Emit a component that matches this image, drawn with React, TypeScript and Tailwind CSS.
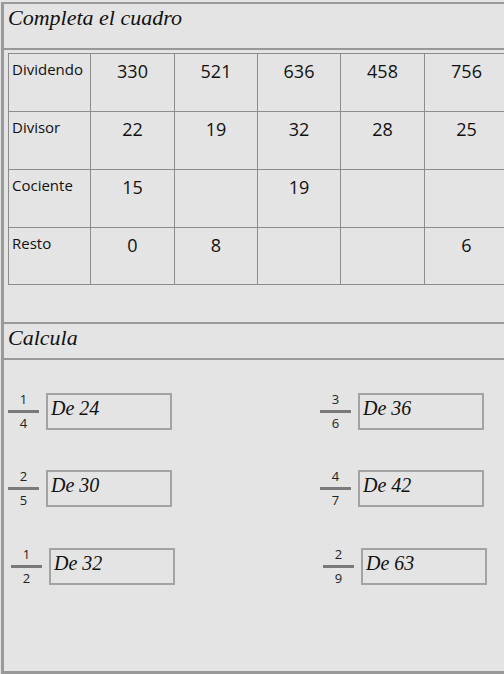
import React from "react";

const script = { fontFamily: '"Liberation Serif", "Times New Roman", serif' };
const sans = { fontFamily: '"Open Sans", "Liberation Sans", sans-serif' };

const rows = [
  { label: "Dividendo", values: ["330", "521", "636", "458", "756"] },
  { label: "Divisor", values: ["22", "19", "32", "28", "25"] },
  { label: "Cociente", values: ["15", "", "19", "", ""] },
  { label: "Resto", values: ["0", "8", "", "", "6"] },
];

const rowHeights = ["h-[58px]", "h-[58px]", "h-[58px]", "h-[57px]"];

const Fraction = ({ top, bottom }: { top: string; bottom: string }) => (
  <div className="flex flex-col items-center w-[31px] text-[13px] text-[#222]" style={sans}>
    <span className="leading-[13px]">{top}</span>
    <div className="h-[3px] w-[31px] bg-[#7a7a7a] my-[4px]" />
    <span className="leading-[13px]">{bottom}</span>
  </div>
);

const Item = ({ top, bottom, of, shift }: { top: string; bottom: string; of: string; shift?: boolean }) => (
  <div className={`flex items-center gap-[7px] ${shift ? "ml-[3px]" : ""}`}>
    <Fraction top={top} bottom={bottom} />
    <div className="w-[126px] h-[37px] border-2 border-[#a3a3a3] pl-[3px] pt-[1px]">
      <span className="italic text-[20px] leading-[24px] text-[#111]" style={script}>
        {of}
      </span>
    </div>
  </div>
);

const App = () => {
  return (
    <div className="w-[504px] h-[674px] bg-[#e4e4e4] pt-[2px] pl-[1px] overflow-hidden">
      <div className="h-[672px] border-l-[3px] border-b-[3px] border-[#999] flex flex-col">
        {/* Completa el cuadro */}
        <div className="h-[48px] border-t-2 border-b-2 border-[#999] pl-[4px] pt-[1px]">
          <span className="italic text-[22px] leading-[26px] text-[#111]" style={script}>
            Completa el cuadro
          </span>
        </div>

        <div className="mt-[3px] ml-[4px] w-[600px] border-l border-t border-[#8c8c8c]">
          {rows.map((row, i) => (
            <div key={row.label} className={`grid grid-cols-[82px_84px_83px_83px_84px_84px] ${rowHeights[i]}`}>
              <div className="border-r border-b border-[#8c8c8c] pl-[3px] pt-[5px] text-[15px] leading-[20px] text-[#111]" style={sans}>
                {row.label}
              </div>
              {row.values.map((v, j) => (
                <div key={j} className="border-r border-b border-[#8c8c8c] text-center pt-[5px] text-[18px] leading-[24px] text-[#111]" style={sans}>
                  {v}
                </div>
              ))}
            </div>
          ))}
        </div>

        {/* Calcula */}
        <div className="mt-[37px] h-[38px] border-t-2 border-b-2 border-[#999] pl-[4px] pt-[1px]">
          <span className="italic text-[22px] leading-[26px] text-[#111]" style={script}>
            Calcula
          </span>
        </div>

        <div className="ml-[4px] mt-[33px] grid grid-cols-[312px_1fr] gap-y-[40px]">
          <Item top="1" bottom="4" of="De 24" />
          <Item top="3" bottom="6" of="De 36" />
          <Item top="2" bottom="5" of="De 30" />
          <Item top="4" bottom="7" of="De 42" />
          <div className="mt-[1px]">
            <Item top="1" bottom="2" of="De 32" shift />
          </div>
          <div className="mt-[1px]">
            <Item top="2" bottom="9" of="De 63" shift />
          </div>
        </div>
      </div>
    </div>
  );
};

export default App;
